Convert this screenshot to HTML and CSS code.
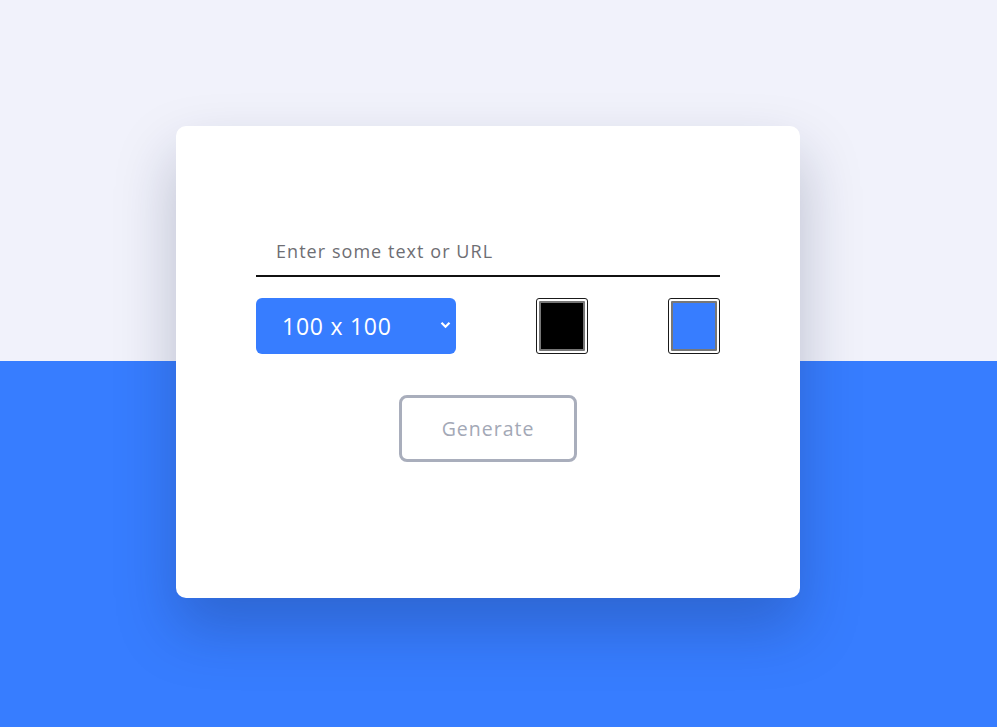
FILE: index.html
```html
<!DOCTYPE html>
<html lang="en">
<head>
<meta charset="utf-8">
<title>QR Generator</title>
<link rel="stylesheet" href="styles.css">
</head>
<body>
<div class="page">
  <div class="card">
    <input class="text-input" type="text" placeholder="Enter some text or URL">
    <div class="options">
      <div class="select-wrap">
        <select class="size-select">
          <option>100 x 100</option>
          <option>200 x 200</option>
          <option>300 x 300</option>
        </select>
        <svg class="chevron" width="11" height="8" viewBox="0 0 11 8"><path d="M1.5 1.8 L5.5 5.8 L9.5 1.8" fill="none" stroke="#fff" stroke-width="2.2"/></svg>
      </div>
      <input class="color" type="color" value="#000000">
      <input class="color" type="color" value="#377dff">
    </div>
    <div class="actions">
      <button class="generate">Generate</button>
    </div>
  </div>
</div>
</body>
</html>
```
FILE: styles.css
```css
html, body {
  margin: 0;
  height: 100%;
}
body {
  background: linear-gradient(to bottom, #f1f2fb 0, #f1f2fb 361px, #377dff 361px, #377dff 100%);
  font-family: "Open Sans", "Liberation Sans", sans-serif;
  min-height: 727px;
}
.page {
  display: flex;
  justify-content: center;
  padding: 126px 21px 0 0;
}
.card {
  box-sizing: border-box;
  width: 624px;
  height: 472px;
  background: #fff;
  border-radius: 10px;
  padding: 100px 80px 0 80px;
  box-shadow: 0 30px 60px rgba(20, 30, 70, 0.25);
  display: flex;
  flex-direction: column;
}
.text-input {
  box-sizing: border-box;
  width: 100%;
  height: 51px;
  border: none;
  border-bottom: 2px solid #111;
  outline: none;
  padding: 0 20px;
  font-family: inherit;
  font-size: 18px;
  letter-spacing: 1.05px;
  color: #333;
}
.text-input::placeholder {
  color: #6e6e73;
}
.options {
  display: flex;
  justify-content: space-between;
  align-items: center;
  margin-top: 21px;
}
.select-wrap {
  position: relative;
  width: 200px;
  height: 56px;
}
.size-select {
  appearance: none;
  -webkit-appearance: none;
  box-sizing: border-box;
  width: 100%;
  height: 100%;
  border: none;
  border-radius: 6px;
  background: #377dff;
  color: #fff;
  font-family: inherit;
  font-size: 23px;
  letter-spacing: 0.75px;
  padding: 0 0 0 26px;
  outline: none;
}
.chevron {
  position: absolute;
  right: 5px;
  top: 23px;
  pointer-events: none;
}
.color {
  box-sizing: border-box;
  width: 52px;
  height: 56px;
  padding: 2px;
  border: 1px solid #1a1a1a;
  border-radius: 3px;
  background: #fff;
  cursor: pointer;
}
.color::-webkit-color-swatch-wrapper {
  padding: 0;
}
.color::-webkit-color-swatch {
  border: 2px solid #777;
  border-radius: 1px;
}
.actions {
  display: flex;
  justify-content: center;
  margin-top: 41px;
}
.generate {
  box-sizing: border-box;
  width: 178px;
  height: 67px;
  background: #fff;
  border: 3px solid #a9aebc;
  border-radius: 8px;
  color: #a3a8b6;
  font-family: inherit;
  font-size: 19.5px;
  letter-spacing: 1px;
  cursor: pointer;
}
```
